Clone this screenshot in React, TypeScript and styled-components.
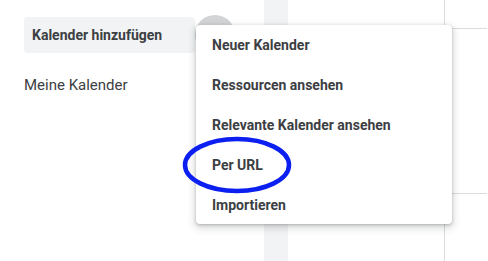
import styled, { createGlobalStyle } from 'styled-components'

const GlobalStyle = createGlobalStyle`
  html, body {
    margin: 0;
    padding: 0;
    background: #fff;
  }
  body {
    font-family: Roboto, "Noto Sans", Arial, sans-serif;
    color: #3c4043;
  }
`

const Page = styled.div`
  position: relative;
  width: 488px;
  height: 261px;
  display: flex;
  overflow: hidden;
  background: #fff;
`

const Sidebar = styled.div`
  width: 264px;
  padding: 17px 0 0 24px;
  box-sizing: border-box;
  display: flex;
  flex-direction: column;
`

const ButtonRow = styled.div`
  display: flex;
  align-items: center;
  height: 36px;
`

const AddButton = styled.div`
  width: 171px;
  height: 36px;
  box-sizing: border-box;
  padding-left: 8px;
  display: flex;
  align-items: center;
  background: #f1f3f4;
  border-radius: 4px;
  font-size: 14px;
  font-weight: 700;
  color: #3c4043;
`

const HoverCircle = styled.div`
  width: 40px;
  height: 40px;
  border-radius: 50%;
  background: #d3d4d6;
  flex-shrink: 0;
`

const SectionLabel = styled.div`
  margin-top: 23px;
  font-size: 15px;
  color: #3c4043;
`

const Strip = styled.div`
  width: 24px;
  background: #f1f3f4;
`

const Main = styled.div`
  flex: 1;
  display: flex;
`

const EmptyCol = styled.div`
  width: 156px;
  border-right: 1px solid #dadce0;
`

const GridCol = styled.div`
  flex: 1;
  display: flex;
  flex-direction: column;
  padding-right: 1px;
`

const GridCell = styled.div<{ $h: number }>`
  height: ${(p) => p.$h}px;
  border-bottom: 1px solid #dadce0;
  flex-shrink: 0;
`

const Menu = styled.div`
  position: absolute;
  left: 196px;
  top: 25px;
  width: 256px;
  height: 199px;
  background: #fff;
  border-radius: 4px;
  box-shadow: 0 1px 3px 0 rgba(60, 64, 67, 0.3), 0 3px 7px 2px rgba(60, 64, 67, 0.17);
  display: flex;
  flex-direction: column;
`

const MenuItem = styled.div`
  height: 40px;
  flex-shrink: 0;
  padding-left: 16px;
  display: flex;
  align-items: center;
  font-size: 14px;
  font-weight: 700;
  color: #3c4043;
`

const Highlight = styled.svg`
  position: absolute;
  left: 180px;
  top: 134px;
  overflow: visible;
`

const items = ['Neuer Kalender', 'Ressourcen ansehen', 'Relevante Kalender ansehen', 'Per URL', 'Importieren']

export default function App() {
  return (
    <>
      <GlobalStyle />
      <Page>
        <Sidebar>
          <ButtonRow>
            <AddButton>Kalender hinzufügen</AddButton>
            <HoverCircle />
          </ButtonRow>
          <SectionLabel>Meine Kalender</SectionLabel>
        </Sidebar>
        <Strip />
        <Main>
          <EmptyCol />
          <GridCol>
            <GridCell $h={28} />
            <GridCell $h={164} />
          </GridCol>
        </Main>
        <Menu>
          {items.map((t) => (
            <MenuItem key={t}>{t}</MenuItem>
          ))}
        </Menu>
        <Highlight width="116" height="62" viewBox="0 0 116 62">
          <ellipse cx="57" cy="31" rx="52" ry="26" fill="none" stroke="#0b1ff0" strokeWidth="4.5" />
        </Highlight>
      </Page>
    </>
  )
}
